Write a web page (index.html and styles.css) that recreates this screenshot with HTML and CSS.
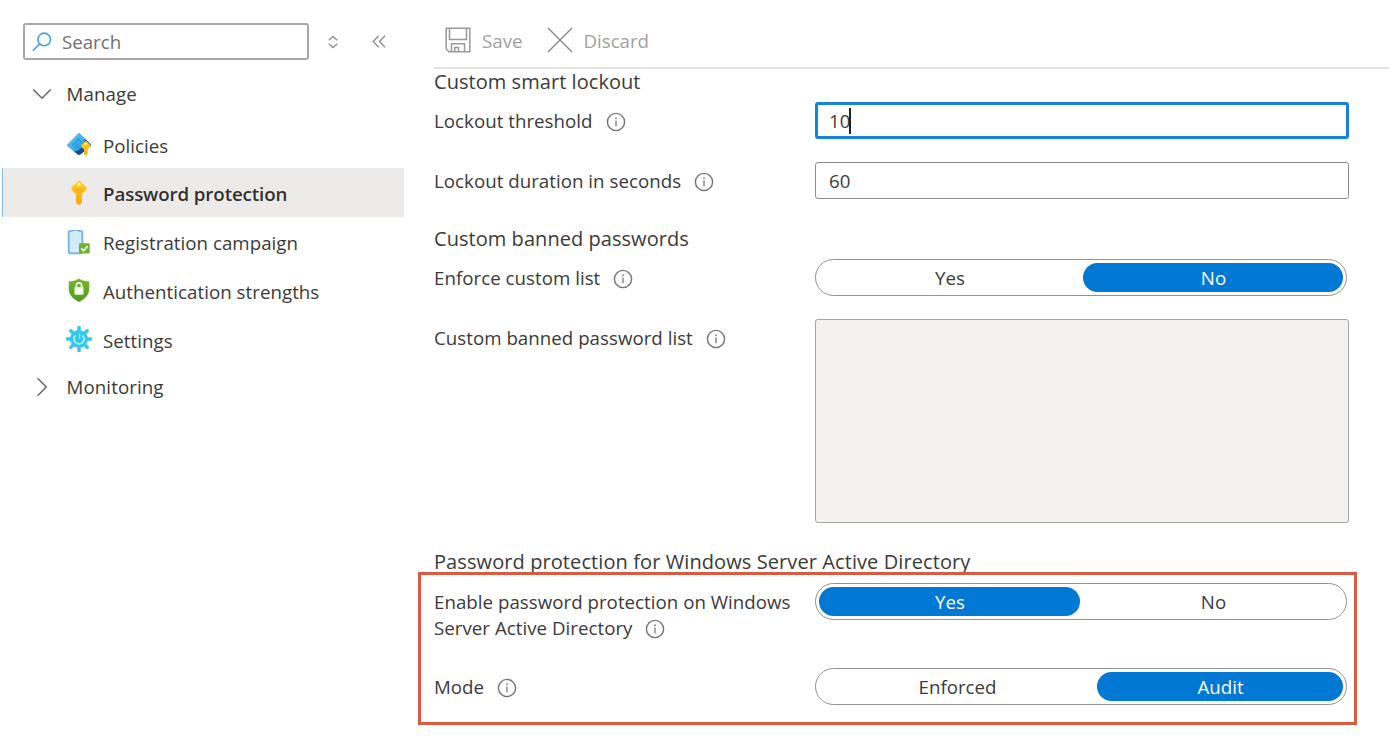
FILE: index.html
```html
<!DOCTYPE html>
<html lang="en">
<head>
<meta charset="utf-8">
<title>Password protection</title>
<link rel="stylesheet" href="styles.css">
</head>
<body>
<svg class="defs" width="0" height="0">
  <defs>
    <symbol id="info" viewBox="0 0 20 20"><circle cx="10" cy="10" r="8.600" fill="none" stroke="#757575" stroke-width="1.400"/><path d="M10 8.600v5.600" stroke="#8a8a8a" stroke-width="1.500"/><circle cx="10" cy="6.200" r="1" fill="#8a8a8a"/></symbol>
    <linearGradient id="blue" x1="0" y1="0" x2="1" y2="1"><stop offset="0" stop-color="#5fd3f5"/><stop offset="1" stop-color="#1b86d6"/></linearGradient>
    <linearGradient id="gold" x1="0" y1="0" x2="0" y2="1"><stop offset="0" stop-color="#ffcf1f"/><stop offset="1" stop-color="#fbab12"/></linearGradient>
    <linearGradient id="green" x1="0" y1="0" x2="0" y2="1"><stop offset="0" stop-color="#76b82a"/><stop offset="1" stop-color="#4f9a17"/></linearGradient>
  </defs>
</svg>
<div class="page">
  <nav class="sidebar">
    <div class="search-row">
      <div class="search">
        <svg class="search-icon" width="20" height="20" viewBox="0 0 20 20" fill="none" stroke="#4a9fe0" stroke-width="1.600"><circle cx="12.200" cy="7.400" r="6.300"/><path d="M7.700 11.900L.8 18.800"/></svg>
        <span>Search</span>
      </div>
      <svg class="sort" width="12" height="14" viewBox="0 0 12 14" fill="none" stroke="#8f8f8f" stroke-width="1.400"><path d="M1.800 5.300L6 1.500l4.200 3.800M1.800 8.700L6 12.500l4.200-3.800"/></svg>
      <svg class="collapse" width="14" height="13" viewBox="0 0 14 13" fill="none" stroke="#8f8f8f" stroke-width="1.400"><path d="M6.700.8L1.200 6.500l5.500 5.700M13 .8L7.500 6.500l5.500 5.700"/></svg>
    </div>
    <div class="group manage">
      <svg width="20" height="20" viewBox="0 0 20 20" fill="none" stroke="#666" stroke-width="1.500"><path d="M1.300 5.500L10 14.300l8.700-8.800"/></svg>
      <span>Manage</span>
    </div>
    <div class="item">
      <svg width="26" height="26" viewBox="0 0 26 26"><path d="M12.200 2.200Q13 1.600 13.800 2.200L24.800 13.500Q25.300 14.300 24.500 15L14.500 23.300Q13 24.200 11.500 23.300L1.200 15Q.6 14.300 1.200 13.500z" fill="url(#blue)"/><path d="M16.500 15L19 8l5.800 5.600q.5.800-.3 1.500L14.800 23.200q-1.800 1-3.300 0L8 20.200q5 .5 8.500-5.200z" fill="#174a91"/><path d="M6.500 14.500l6-6.300 4.500 4.800-4.500 4.500-3-2.500 3-2.500" fill="none" stroke="#2a9be2" stroke-width="1.600"/><path d="M19 10.300Q19.800 9.600 20.600 10.300L24.300 13.900Q25 15 24.300 15.900L21.600 18.500V23.200L19.800 24.800 18 23.200V18.500L15.300 15.900Q14.600 15 15.300 13.900z" fill="url(#gold)"/><circle cx="19.800" cy="13" r="1.100" fill="#fff3b0"/></svg>
      <span>Policies</span>
    </div>
    <div class="item selected">
      <svg width="26" height="26" viewBox="0 0 26 26"><path d="M11.600 1.400Q13 .2 14.400 1.400L20.200 7Q21.600 8.500 20.200 10L16 14.200V22.500L13.900 24.700Q13 25.400 12.100 24.700L10 22.500V14.200L5.800 10Q4.400 8.500 5.800 7z" fill="url(#gold)"/><circle cx="13" cy="4.500" r="1.700" fill="#fff0bd"/><path d="M9 9.300h8M9 11.200h8" stroke="#f8a813" stroke-width="1"/><path d="M12 15v7.500" stroke="#f59c12" stroke-width="1"/></svg>
      <span>Password protection</span>
    </div>
    <div class="item">
      <svg width="26" height="26" viewBox="0 0 26 26"><rect x="2.700" y="1.800" width="13.600" height="22.500" rx="1.800" fill="#d1ecfb" stroke="#73b1ee" stroke-width="1.800"/><path d="M7.200 2.700h4.600" stroke="#fff" stroke-width="1.200"/><rect x="13" y="14.300" width="10.700" height="10.200" rx=".8" fill="#6bb52d"/><path d="M15.200 19.300l2.300 2.400 4.100-4.600" fill="none" stroke="#fff" stroke-width="1.600"/></svg>
      <span>Registration campaign</span>
    </div>
    <div class="item">
      <svg width="26" height="26" viewBox="0 0 26 26"><path d="M13 1.400C16.500 3.900 19.500 4.100 23.200 4.200V12.300C23.200 18.500 18 22.500 13 25 8 22.500 2.800 18.500 2.800 12.300V4.200C6.500 4.100 9.500 3.900 13 1.400z" fill="url(#green)"/><path d="M10.300 11V8.700q0-2.800 2.700-2.800t2.700 2.800V11" fill="none" stroke="#fff" stroke-width="1.700"/><rect x="8.500" y="10" width="9" height="7.700" rx=".8" fill="#f4faea"/></svg>
      <span>Authentication strengths</span>
    </div>
    <div class="item">
      <svg width="26" height="26" viewBox="0 0 26 26"><circle cx="13" cy="13" r="9" fill="#32c8f0"/><path d="M13 1.300v23.400M1.300 13h23.400M4.800 4.800l16.400 16.400M21.200 4.800L4.800 21.200" stroke="#32c8f0" stroke-width="3.400" stroke-linecap="round"/><path d="M9.500 9.400A5 5 0 1 0 16.500 9.400" fill="none" stroke="#b9f0fd" stroke-width="1.700"/><path d="M13.500 7.300v5.700" fill="none" stroke="#8fe3f8" stroke-width="1.400"/></svg>
      <span>Settings</span>
    </div>
    <div class="group monitoring">
      <svg width="20" height="20" viewBox="0 0 20 20" fill="none" stroke="#666" stroke-width="1.500"><path d="M5.500 1.300L14.300 10l-8.800 8.700"/></svg>
      <span>Monitoring</span>
    </div>
  </nav>

  <main class="content">
    <header class="toolbar">
      <svg width="26" height="26" viewBox="0 0 26 26" fill="none" stroke="#999" stroke-width="1.500"><path d="M1.200 1.200h23.600v23.600H4L1.200 22zM4.500 1.200v11.300h17V1.200M6.500 24.500v-7.700h13v7.700M9.700 24.500v-4h3.800v4"/></svg>
      <span class="save">Save</span>
      <svg width="26" height="26" viewBox="0 0 26 26" fill="none" stroke="#8d8d8d" stroke-width="1.500"><path d="M1 1l24 24M25 1L1 25"/></svg>
      <span class="discard">Discard</span>
    </header>

    <h2 class="heading first">Custom smart lockout</h2>
    <div class="row">
      <div class="label">Lockout threshold<svg class="info"><use href="#info"/></svg></div>
      <div class="field focused">10<span class="caret"></span></div>
    </div>
    <div class="row">
      <div class="label">Lockout duration in seconds<svg class="info"><use href="#info"/></svg></div>
      <div class="field">60</div>
    </div>

    <h2 class="heading banned">Custom banned passwords</h2>
    <div class="row">
      <div class="label">Enforce custom list<svg class="info"><use href="#info"/></svg></div>
      <div class="toggle"><span class="option">Yes</span><span class="option active">No</span></div>
    </div>
    <div class="row">
      <div class="label">Custom banned password list<svg class="info"><use href="#info"/></svg></div>
      <div class="textarea"></div>
    </div>

    <h2 class="heading directory">Password protection for Windows Server Active Directory</h2>
    <div class="row tall">
      <div class="label">Enable password protection on Windows<br>Server Active Directory<svg class="info"><use href="#info"/></svg></div>
      <div class="toggle"><span class="option active">Yes</span><span class="option">No</span></div>
    </div>
    <div class="row">
      <div class="label">Mode<svg class="info"><use href="#info"/></svg></div>
      <div class="toggle mode"><span class="option">Enforced</span><span class="option active">Audit</span></div>
    </div>
  </main>
  <div class="highlight"></div>
</div>
</body>
</html>
```
FILE: styles.css
```css
* { box-sizing: border-box; }
body {
  margin: 0;
  background: #fff;
  color: #3b3a39;
  font: 18.7px/26px "Open Sans", "Noto Sans", sans-serif;
}
svg { display: block; flex: none; }
.defs { position: absolute; }
.page {
  position: relative;
  display: flex;
  width: 1389px;
  height: 752px;
  overflow: hidden;
}

/* Navigation */
.sidebar { width: 434px; flex: none; padding: 23px 30px 0 2px; }
.search-row { display: flex; align-items: center; height: 37px; padding-left: 21px; }
.search {
  display: flex;
  align-items: center;
  gap: 10px;
  width: 286px;
  height: 37px;
  padding-left: 8px;
  border: 2px solid #a9a7a5;
  border-radius: 3px;
  color: #707070;
}
.search-icon { margin-left: -1px; }
.sort { margin-left: 18px; }
.collapse { margin-left: 33px; }
.group { display: flex; align-items: center; gap: 14.500px; padding-left: 30px; letter-spacing: .1px; }
.manage { height: 51px; margin-top: 8.300px; }
.monitoring { height: 48px; }
.item {
  display: flex;
  align-items: center;
  gap: 11.500px;
  height: 48.750px;
  padding: 1px 0 0 62.500px;
  border-left: 1px solid transparent;
}
.item span { padding-top: 3px; letter-spacing: .04px; }
.selected {
  background: #edebe9;
  border-left-color: #81bcea;
  color: #323130;
  font-weight: 600;
}
.selected span { letter-spacing: -.1px; }

/* Form */
.content { flex: 1; }
.toolbar {
  display: flex;
  align-items: center;
  height: 69px;
  padding: 12px 0 0 11px;
  border-bottom: 2px solid #e1e1e1;
  color: #a19f9d;
}
.save { margin: 3px 25px 0 11px; }
.discard { margin: 3px 0 0 10px; }
.heading {
  height: 24px;
  margin: 0 0 9px;
  font-size: 20px;
  font-weight: 400;
  line-height: 25px;
  letter-spacing: .05px;
  white-space: nowrap;
}
.banned { margin-top: 27px; }
.directory { margin-top: 26px; margin-bottom: 10px; letter-spacing: .09px; }
.row {
  display: grid;
  grid-template-columns: 381px 534px;
  align-items: start;
  margin-bottom: 23px;
}
.tall { margin-bottom: 27.500px; }
.label { padding-top: 5.500px; letter-spacing: .03px; white-space: nowrap; }
.info {
  display: inline-block;
  width: 20px;
  height: 20px;
  margin-left: 13px;
  margin-bottom: -4px;
  vertical-align: baseline;
}
.field {
  display: flex;
  align-items: center;
  height: 37px;
  padding-left: 13px;
  border: 1.500px solid #8f8d8b;
  border-radius: 3px;
}
.focused { padding-left: 11px; border: 3px solid #1683d8; }
.caret { width: 1.500px; height: 26px; margin-left: -1px; background: #222; }
.textarea {
  height: 204px;
  border: 1.500px solid #a8a6a4;
  border-radius: 3px;
  background: #f3f2f1;
}
.toggle {
  display: grid;
  grid-template-columns: 261px 260px;
  justify-content: space-between;
  width: 532px;
  height: 37px;
  padding: 3px;
  border: 1.500px solid #929292;
  border-radius: 19px;
}
.mode { grid-template-columns: 276px 246px; }
.option {
  display: flex;
  align-items: center;
  justify-content: center;
  padding-left: 1px;
  border-radius: 15px;
}
.active { background: #0078d4; color: #fff; }

/* Callout frame */
.highlight {
  position: absolute;
  left: 418px;
  top: 572px;
  width: 939px;
  height: 153px;
  border: 3px solid #dc5a40;
}
```
